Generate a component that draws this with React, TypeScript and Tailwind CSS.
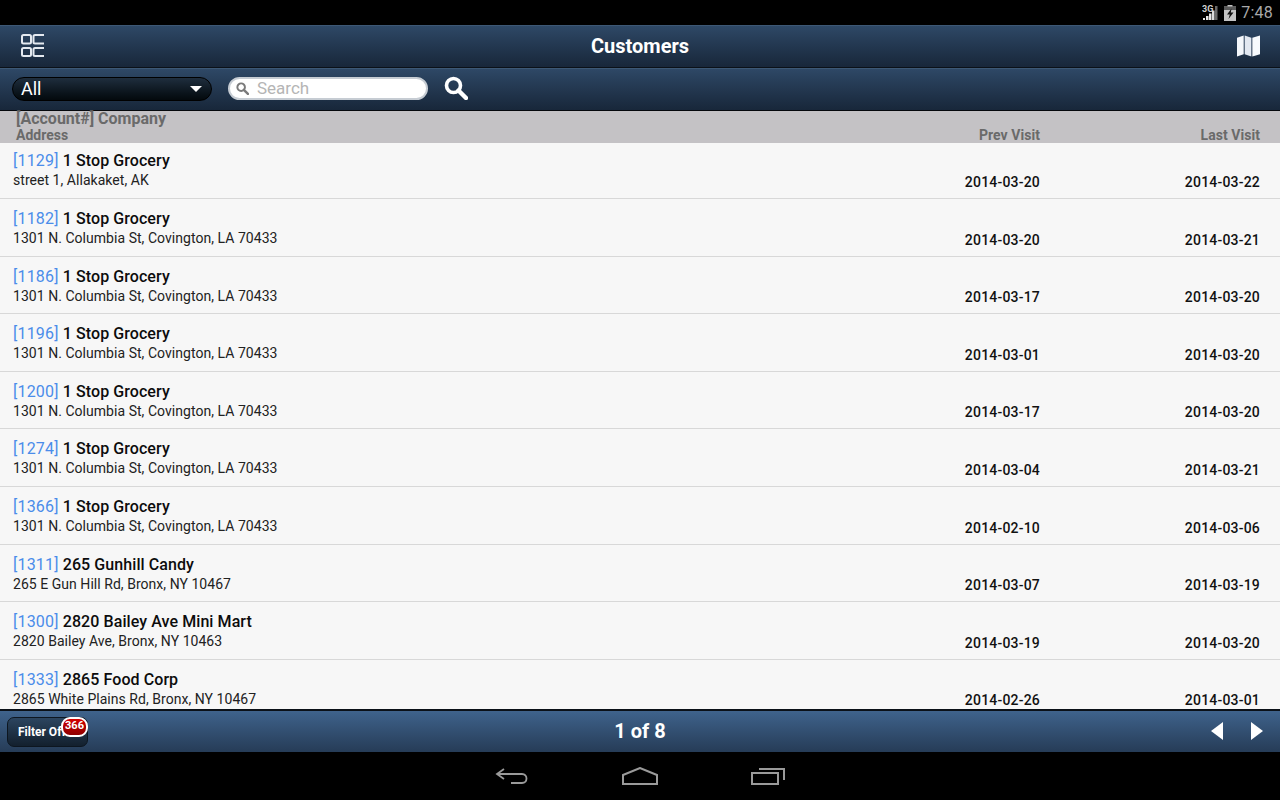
const customers = [
  { id: 1129, name: "1 Stop Grocery", address: "street 1, Allakaket, AK", prev: "2014-03-20", last: "2014-03-22" },
  { id: 1182, name: "1 Stop Grocery", address: "1301 N. Columbia St, Covington, LA 70433", prev: "2014-03-20", last: "2014-03-21" },
  { id: 1186, name: "1 Stop Grocery", address: "1301 N. Columbia St, Covington, LA 70433", prev: "2014-03-17", last: "2014-03-20" },
  { id: 1196, name: "1 Stop Grocery", address: "1301 N. Columbia St, Covington, LA 70433", prev: "2014-03-01", last: "2014-03-20" },
  { id: 1200, name: "1 Stop Grocery", address: "1301 N. Columbia St, Covington, LA 70433", prev: "2014-03-17", last: "2014-03-20" },
  { id: 1274, name: "1 Stop Grocery", address: "1301 N. Columbia St, Covington, LA 70433", prev: "2014-03-04", last: "2014-03-21" },
  { id: 1366, name: "1 Stop Grocery", address: "1301 N. Columbia St, Covington, LA 70433", prev: "2014-02-10", last: "2014-03-06" },
  { id: 1311, name: "265 Gunhill Candy", address: "265 E Gun Hill Rd, Bronx, NY 10467", prev: "2014-03-07", last: "2014-03-19" },
  { id: 1300, name: "2820 Bailey Ave Mini Mart", address: "2820 Bailey Ave, Bronx, NY 10463", prev: "2014-03-19", last: "2014-03-20" },
  { id: 1333, name: "2865 Food Corp", address: "2865 White Plains Rd, Bronx, NY 10467", prev: "2014-02-26", last: "2014-03-01" },
];

function SearchGlyph({ className }: { className: string }) {
  return (
    <svg viewBox="0 0 24 24" className={className} fill="none" stroke="currentColor">
      <circle cx="9.500" cy="9.500" r="7" strokeWidth="3.600" />
      <path d="M14.500 14.500L22 22" strokeWidth="4.400" strokeLinecap="round" />
    </svg>
  );
}

export default function App() {
  return (
    <div className="w-[1280px] h-[800px] overflow-hidden flex flex-col bg-black font-['Roboto',sans-serif]">
      {/* status bar */}
      <div className="h-[25px] flex items-center justify-end bg-black pr-[7px] text-[#a9a9a9]">
        <svg viewBox="0 0 16 15" className="w-[16px] h-[15px] mr-[6px]">
          <text x="0" y="7" fontSize="9" fontWeight="700" fill="#d0d0d0" fontFamily="Roboto">3G</text>
          <path d="M1 15h2v-2H1zM4 15h2.500v-4H4zM7 15h2.500V8.500H7z" fill="#e6e6e6" />
          <path d="M10 15h2.500V5.500H10z" fill="#dcdcdc" />
          <path d="M13 15h2.500V1H13z" fill="#6a6a6a" />
        </svg>
        <svg viewBox="0 0 12 16" className="w-[12px] h-[16px] mr-[5px]">
          <path d="M3.500 0h5v1.500H12V16H0V1.500h3.500z" fill="#c4c4c4" />
          <path d="M0 1.500h12V5H0z" fill="#5a5a5a" />
          <path d="M7.500 3.500L3 9.500h2.800L4.500 14 9.500 7.500H6.800z" fill="#111" />
        </svg>
        <span className="text-[16px] leading-none tracking-[0.2px]">7:48</span>
      </div>

      {/* title bar */}
      <div className="relative h-[43px] flex items-center justify-between pl-[21px] pr-[20px] pb-[2px] border-t border-[#3d5875] border-b border-b-[#0b1118] bg-gradient-to-b from-[#2e4866] to-[#18273a]">
        <svg viewBox="0 0 23 23" className="w-[23px] h-[23px]" fill="none" stroke="#e4e9f0" strokeWidth="2">
          <rect x="1" y="1" width="9" height="8.500" rx="1.500" />
          <path d="M23 1h-9a1.500 1.500 0 0 0 -1.500 1.500v5.500a1.500 1.500 0 0 0 1.500 1.500H23" />
          <rect x="1" y="14" width="9" height="8" rx="1.500" />
          <path d="M23 14h-9a1.500 1.500 0 0 0 -1.500 1.500v5a1.500 1.500 0 0 0 1.500 1.500H23" />
        </svg>
        <span className="absolute left-0 right-0 text-center text-[20px] font-bold text-white leading-none">Customers</span>
        <svg viewBox="0 0 24 23" className="w-[23px] h-[23px]">
          <path d="M0 3.500L7 1v19.500L0 23z" fill="#f4f7fb" />
          <path d="M8 1l7 2.500V23l-7-2.500z" fill="#e2e8f1" />
          <path d="M16 3.500L24 1v19.500L16 23z" fill="#f8fafd" />
        </svg>
      </div>

      {/* filter toolbar */}
      <div className="h-[43px] flex items-center pl-[12px] pb-[2px] border-t border-[#3d5875] border-b border-b-[#05080c] bg-gradient-to-b from-[#2e4866] to-[#18273a]">
        <div className="w-[200px] h-[24px] rounded-full flex items-center justify-between pl-[8px] pr-[9px] border border-black bg-gradient-to-b from-[#1f2e3e] to-[#04090d]">
          <span className="text-[18px] text-white leading-none">All</span>
          <span className="w-0 h-0 border-l-[6px] border-r-[6px] border-t-[6px] border-l-transparent border-r-transparent border-t-white" />
        </div>
        <div className="ml-[16px] w-[200px] h-[23px] rounded-full flex items-center bg-white border-2 border-[#c6ccd3] pl-[6px]">
          <SearchGlyph className="w-[13px] h-[13px] text-[#7a7a7a]" />
          <span className="ml-[8px] text-[17px] text-[#b5b5b5] leading-none">Search</span>
        </div>
        <SearchGlyph className="ml-[16px] -mt-[1px] w-[24px] h-[24px] text-white" />
      </div>

      {/* column header */}
      <div className="relative z-10 h-[32px] flex justify-between items-end pl-[16px] pr-[20px] bg-[#c4c2c5] text-[#6a6a6a] font-bold">
        <div className="flex flex-col">
          <span className="text-[16px] leading-[16px]">[Account#] Company</span>
          <span className="text-[14px] leading-[16px]">Address</span>
        </div>
        <div className="flex text-[14px] leading-[16px] tracking-[0.05px]">
          <span className="w-[120px] text-right">Prev Visit</span>
          <span className="w-[220px] text-right">Last Visit</span>
        </div>
      </div>

      {/* list */}
      <div className="h-[566px] overflow-hidden bg-[#f7f7f7]">
        <div className="-mt-[1.6px]">
          {customers.map((c) => (
            <div key={c.id} className="h-[57.6px] flex justify-between pl-[13px] pr-[20px] border-b border-[#d8d8d8]">
              <div className="flex flex-col pt-[11px]">
                <div className="text-[16px] leading-[18px] font-medium text-[#0c0c0c] tracking-[0.08px]">
                  <span className="font-normal text-[#4a8cea] tracking-[0.2px]">[{c.id}]</span> {c.name}
                </div>
                <div className="mt-[2px] text-[14px] leading-[17px] text-[#222] tracking-[0.04px]">{c.address}</div>
              </div>
              <div className="flex items-start pt-[32.7px] text-[14px] leading-[16px] font-medium text-[#111] tracking-[0.2px]">
                <span className="w-[120px] text-right">{c.prev}</span>
                <span className="w-[220px] text-right">{c.last}</span>
              </div>
            </div>
          ))}
        </div>
      </div>

      {/* footer */}
      <div className="relative h-[43px] flex items-center justify-between pl-[7px] pr-[17px] border-t-2 border-[#0b1118] bg-gradient-to-b from-[#3f638c] to-[#263c57]">
        <div className="relative w-[81px] h-[30px] rounded-[7px] border border-[#0d1620] flex items-center pl-[10px] bg-gradient-to-b from-[#2c4560] to-[#13202e]">
          <span className="text-[12px] font-bold text-white leading-none">Filter Off</span>
          <span className="absolute -top-[1px] -right-[1px] w-[27px] h-[20px] rounded-[9px] border-2 border-white flex items-center justify-center bg-gradient-to-b from-[#d40000] to-[#8f0000] text-[11px] font-bold text-white leading-none pb-[3px]">
            366
          </span>
        </div>
        <span className="absolute left-0 right-0 pb-[1px] text-center text-[20px] font-bold text-white leading-none">1 of 8</span>
        <div className="flex items-center gap-[28px] pb-[1px]">
          <span className="w-0 h-0 border-t-[9px] border-b-[9px] border-r-[12px] border-t-transparent border-b-transparent border-r-white" />
          <span className="w-0 h-0 border-t-[9px] border-b-[9px] border-l-[12px] border-t-transparent border-b-transparent border-l-white" />
        </div>
      </div>

      {/* android nav */}
      <div className="h-[48px] flex items-center justify-center bg-black text-[#9a9a9a]">
        <svg viewBox="0 0 34 18" className="w-[34px] h-[18px]" fill="none" stroke="currentColor" strokeWidth="1.800">
          <path d="M9 2L2 7l7 5M2 7h25c6 0 6 9 0 9H16" />
        </svg>
        <svg viewBox="0 0 36 18" className="ml-[93px] w-[36px] h-[18px]" fill="none" stroke="currentColor" strokeWidth="2">
          <path d="M1 8L18 1l17 7v9H1z" />
        </svg>
        <svg viewBox="0 0 34 18" className="ml-[93px] w-[34px] h-[18px]" fill="none" stroke="currentColor" strokeWidth="2">
          <rect x="1" y="6" width="26" height="11" />
          <path d="M8 2h25v11" />
        </svg>
      </div>
    </div>
  );
}
